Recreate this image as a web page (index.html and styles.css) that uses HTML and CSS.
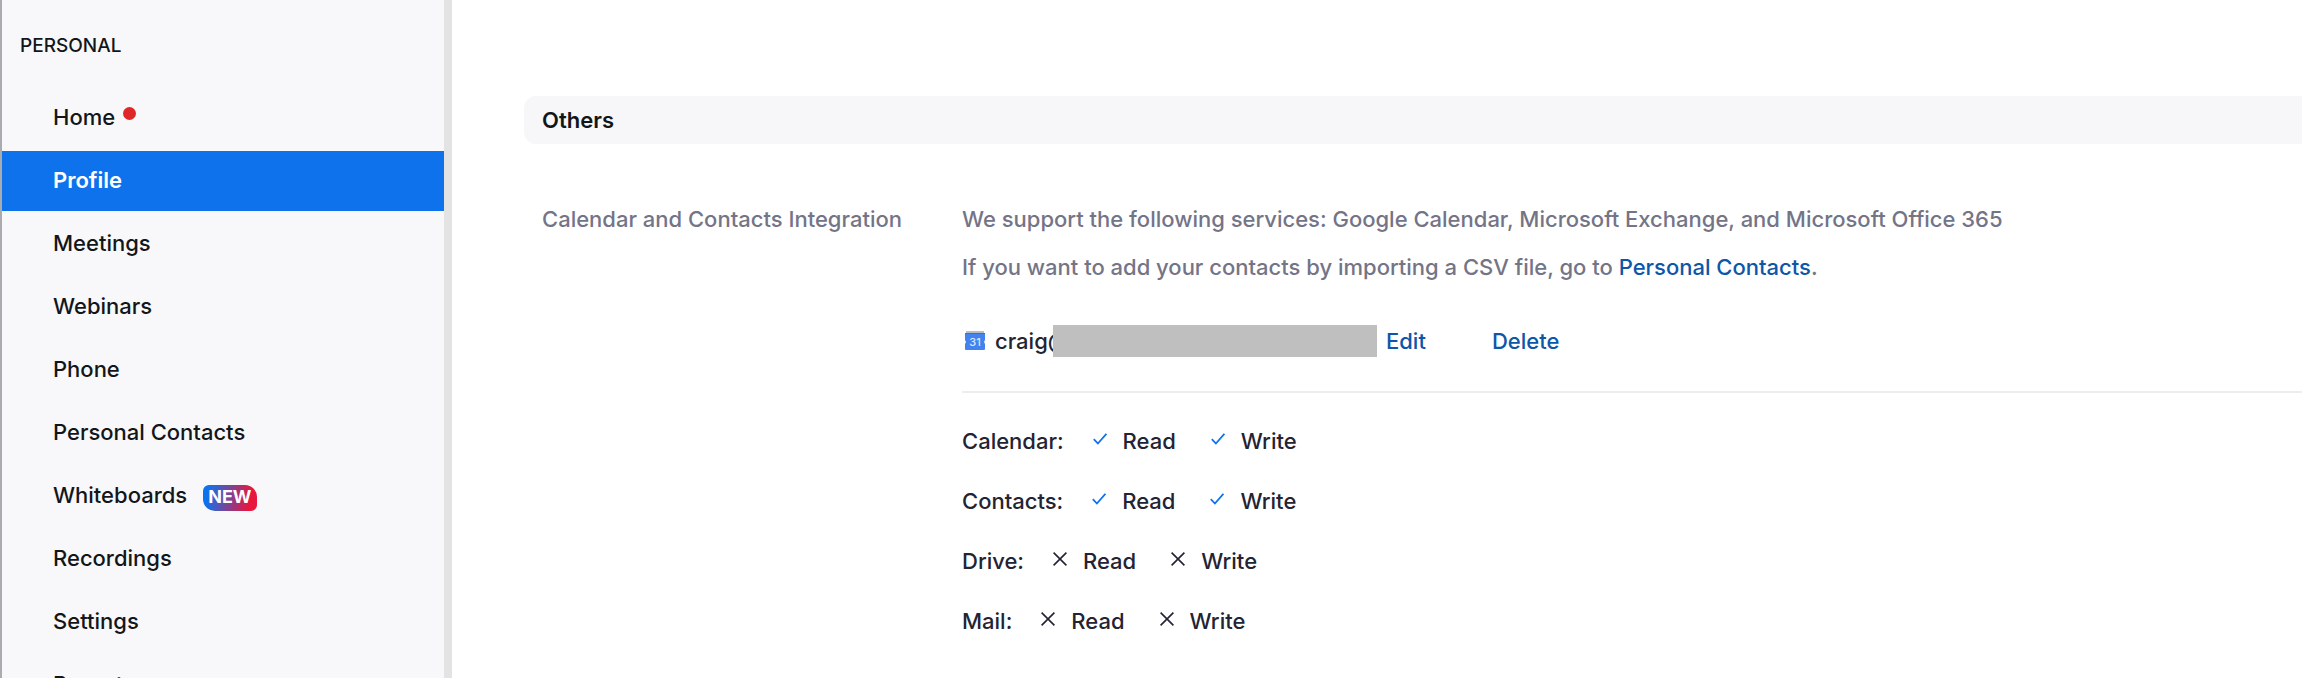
FILE: index.html
```html
<!DOCTYPE html>
<html lang="en">
<head>
    <meta charset="UTF-8">
    <title>Profile</title>
    <link rel="stylesheet" href="styles.css">
</head>
<body>
    <svg class="sprite" aria-hidden="true">
        <symbol id="check" viewBox="0 0 14 14">
            <path d="M0.8 7.2 L4.9 11.5 L13.4 1.8" fill="none" stroke="currentColor" stroke-width="1.8"/>
        </symbol>
        <symbol id="cross" viewBox="0 0 14 14">
            <path d="M0.6 0.6 L13.4 13.4 M13.4 0.6 L0.6 13.4" fill="none" stroke="currentColor" stroke-width="1.6"/>
        </symbol>
    </svg>

    <div class="page">
        <nav class="sidebar">
            <h2 class="sidebar-title">PERSONAL</h2>
            <ul class="menu">
                <li><a href="#">Home<span class="dot"></span></a></li>
                <li><a href="#" class="active">Profile</a></li>
                <li><a href="#">Meetings</a></li>
                <li><a href="#">Webinars</a></li>
                <li><a href="#">Phone</a></li>
                <li><a href="#">Personal Contacts</a></li>
                <li><a href="#">Whiteboards<span class="badge">NEW</span></a></li>
                <li><a href="#">Recordings</a></li>
                <li><a href="#">Settings</a></li>
                <li><a href="#">Reports</a></li>
            </ul>
        </nav>

        <main class="content">
            <h3 class="section-title">Others</h3>

            <div class="setting">
                <div class="setting-label">Calendar and Contacts Integration</div>
                <div class="setting-body">
                    <p>We support the following services: Google Calendar, Microsoft Exchange, and Microsoft Office 365</p>
                    <p>If you want to add your contacts by importing a CSV file, go to <a href="#">Personal Contacts</a>.</p>

                    <div class="account">
                        <svg class="calendar-icon" viewBox="0 0 20 20" aria-hidden="true">
                            <rect x="1" y="0" width="18" height="4" fill="#b9bdc6"/>
                            <path d="M1 2 H19 Q20 2 20 3 V9 L19 11 L20 13 V18 Q20 19 19 19 H1 Q0 19 0 18 V13 L1 11 L0 9 V3 Q0 2 1 2 Z" fill="#4383f0"/>
                            <rect x="0" y="2" width="20" height="1" fill="#3a6fd0"/>
                            <text x="10" y="15" text-anchor="middle" class="calendar-day">31</text>
                        </svg>
                        <span class="email">craig@<span class="mask"></span></span>
                        <a href="#" class="edit">Edit</a>
                        <a href="#">Delete</a>
                    </div>

                    <ul class="permissions">
                        <li>
                            <span>Calendar:</span>
                            <span class="perm"><svg class="check"><use href="#check"/></svg>Read</span>
                            <span class="perm"><svg class="check"><use href="#check"/></svg>Write</span>
                        </li>
                        <li>
                            <span>Contacts:</span>
                            <span class="perm"><svg class="check"><use href="#check"/></svg>Read</span>
                            <span class="perm"><svg class="check"><use href="#check"/></svg>Write</span>
                        </li>
                        <li>
                            <span>Drive:</span>
                            <span class="perm"><svg><use href="#cross"/></svg>Read</span>
                            <span class="perm"><svg><use href="#cross"/></svg>Write</span>
                        </li>
                        <li>
                            <span>Mail:</span>
                            <span class="perm"><svg><use href="#cross"/></svg>Read</span>
                            <span class="perm"><svg><use href="#cross"/></svg>Write</span>
                        </li>
                    </ul>
                </div>
            </div>
        </main>
    </div>
</body>
</html>
```
FILE: styles.css
```css
* {
    box-sizing: border-box;
}

body {
    margin: 0;
    height: 100vh;
    overflow: hidden;
    font-family: Inter, "Liberation Sans", Arial, sans-serif;
    font-size: 22px;
    font-weight: 500;
    line-height: 48px;
    color: #232333;
    background: #fff;
}

ul {
    list-style: none;
    margin: 0;
    padding: 0;
}

a {
    color: #0e56a8;
    text-decoration: none;
}

.sprite {
    display: none;
}

.page {
    display: flex;
    height: 100%;
}

.sidebar {
    flex: 0 0 452px;
    background: #f8f8fb;
    border-left: 2px solid #a9abb0;
    border-right: 8px solid #e3e3e3;
    overflow: hidden;
}

.sidebar-title {
    margin: 0;
    padding: 31px 18px 27px;
    font-size: 19px;
    font-weight: 500;
    line-height: 30px;
    color: #131619;
}

.menu {
    display: flex;
    flex-direction: column;
    gap: 3px;
}

.menu a {
    display: flex;
    align-items: center;
    height: 60px;
    padding: 0 51px 2px;
    color: #131619;
}

.menu .active {
    background: #0e72ed;
    color: #fff;
    font-weight: 600;
}

.dot {
    width: 13px;
    height: 13px;
    margin: 0 0 8px 8px;
    border-radius: 50%;
    background: #de2828;
}

.badge {
    margin: 5px 0 0 16px;
    padding: 0 5px 2px;
    border-radius: 6px 12px 6px 12px;
    background: linear-gradient(100deg, #0e72ed 10%, #e8173d 85%);
    color: #fff;
    font-size: 18px;
    font-weight: 700;
    line-height: 24px;
}

.content {
    flex: 1;
    min-width: 0;
    padding: 96px 0 0 72px;
}

.section-title {
    margin: 0;
    padding-left: 18px;
    border-radius: 12px 0 0 12px;
    background: #f7f7fa;
    font-size: 22px;
    font-weight: 600;
    color: #131619;
}

.setting {
    display: flex;
    padding: 51px 0 0 18px;
}

.setting-label {
    flex: 0 0 420px;
    color: #747487;
}

.setting-body {
    flex: 1;
    min-width: 0;
}

.setting-body p {
    margin: 0;
    color: #747487;
}

.account {
    display: flex;
    align-items: center;
    padding: 26px 0;
    border-bottom: 2px solid #ededf0;
}

.calendar-icon {
    width: 20px;
    height: 20px;
    margin: 0 10px 0 3px;
}

.calendar-day {
    font-size: 11px;
    font-weight: 500;
    fill: #dce8fd;
}

.email {
    position: relative;
    width: 382px;
}

/* hides the rest of the address */
.mask {
    position: absolute;
    top: 8px;
    right: 0;
    width: 324px;
    height: 32px;
    background: #bfbfbf;
}

.edit {
    margin: 0 66px 0 9px;
}

.permissions {
    display: flex;
    flex-direction: column;
    gap: 12px;
    padding-top: 24px;
}

.permissions li {
    display: flex;
}

.perm {
    display: flex;
    align-items: center;
    margin-left: 29px;
}

.perm + .perm {
    margin-left: 35px;
}

.perm svg {
    width: 14px;
    height: 14px;
    margin: 0 16px 4px 0;
}

.check {
    color: #0e72ed;
}
```
